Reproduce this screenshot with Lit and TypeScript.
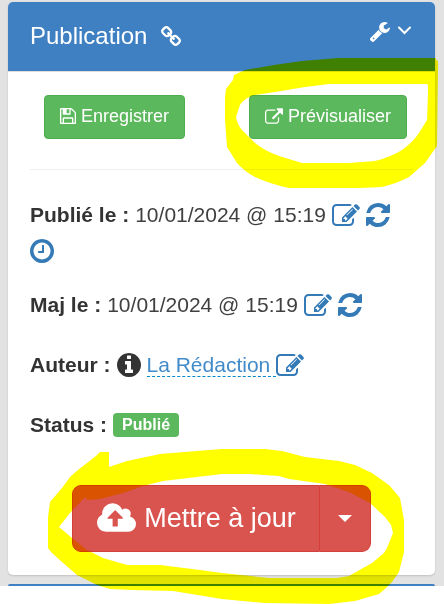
import { LitElement, html, css, nothing } from "lit";
import { customElement, state } from "lit/decorators.js";

interface Glyph {
  box: string;
  d: string;
}

const ROUND = "128 128 1536 1536";

const glyphs: Record<string, Glyph> = {
  link: {
    box: "80 16 1632 1632",
    d: "M1520 1216q0-40-28-68l-208-208q-28-28-68-28-42 0-72 32 3 3 19 18.5t21.5 21.5 15 19 13 25.5 3.5 27.5q0 40-28 68t-68 28q-15 0-27.5-3.5t-25.5-13-19-15-21.5-21.5-18.5-19q-33 31-33 73 0 40 28 68l206 207q27 27 68 27 40 0 68-26l147-146q28-28 28-67zm-703-705q0-40-28-68l-206-207q-28-28-68-28-39 0-68 27l-147 146q-28 28-28 67 0 40 28 68l208 208q27 27 68 27 42 0 72-31-3-3-19-18.5t-21.5-21.5-15-19-13-25.5-3.5-27.5q0-40 28-68t68-28q15 0 27.5 3.5t25.5 13 19 15 21.5 21.5 18.5 19q33-31 33-73zm895 705q0 120-85 203l-147 146q-83 83-203 83-121 0-204-85l-206-207q-83-83-83-203 0-123 88-209l-88-88q-86 88-208 88-120 0-204-84l-208-208q-84-84-84-204t85-203l147-146q83-83 203-83 121 0 204 85l206 207q83 83 83 203 0 123-88 209l88 88q86-88 208-88 120 0 204 84l208 208q84 84 84 204z",
  },
  wrench: {
    box: "85 128 1643 1643",
    d: "M448 1472q0-26-19-45t-45-19-45 19-19 45 19 45 45 19 45-19 19-45zm644-420l-682 682q-37 37-90 37-52 0-91-37l-106-108q-38-36-38-90 0-53 38-91l681-681q39 98 114.5 173.5t173.5 114.5zm634-435q0 39-23 106-47 134-164.5 217.5t-258.5 83.5q-185 0-316.5-131.5t-131.5-316.5 131.5-316.5 316.5-131.5q58 0 121.5 16.5t107.5 46.5q16 11 16 28t-16 28l-293 169v224l193 107q5-3 79-48.5t135.5-81 70.5-35.5q15 0 23.5 10t8.5 25z",
  },
  save: {
    box: ROUND,
    d: "M512 1536h768v-384h-768v384zm896 0h128v-896q0-14-10-38.5t-20-34.5l-281-281q-10-10-34-20t-39-10v416q0 40-28 68t-68 28h-576q-40 0-68-28t-28-68v-416h-128v1280h128v-416q0-40 28-68t68-28h832q40 0 68 28t28 68v416zm-384-928v-320q0-13-9.5-22.5t-22.5-9.5h-192q-13 0-22.5 9.5t-9.5 22.5v320q0 13 9.5 22.5t22.5 9.5h192q13 0 22.5-9.5t9.5-22.5zm640 32v928q0 40-28 68t-68 28h-1344q-40 0-68-28t-28-68v-1344q0-40 28-68t68-28h928q40 0 88 20t76 48l280 280q28 28 48 76t20 88z",
  },
  external: {
    box: "0 0 1792 1536",
    d: "M1408 928v320q0 119-84.5 203.5t-203.5 84.5h-832q-119 0-203.5-84.5t-84.5-203.5v-832q0-119 84.5-203.5t203.5-84.5h704q14 0 23 9t9 23v64q0 14-9 23t-23 9h-704q-66 0-113 47t-47 113v832q0 66 47 113t113 47h832q66 0 113-47t47-113v-320q0-14 9-23t23-9h64q14 0 23 9t9 23zm384-864v512q0 26-19 45t-45 19-45-19l-176-176-652 652q-10 10-23 10t-23-10l-114-114q-10-10-10-23t10-23l652-652-176-176q-19-19-19-45t19-45 45-19h512q26 0 45 19t19 45z",
  },
  edit: {
    box: "0 128 1792 1408",
    d: "M888 1184l116-116-152-152-116 116v56h96v96h56zm440-720q-16-16-33 1l-350 350q-17 17-1 33t33-1l350-350q17-17 1-33zm80 594v190q0 119-84.5 203.5t-203.5 84.5h-832q-119 0-203.5-84.5t-84.5-203.5v-832q0-119 84.5-203.5t203.5-84.5h832q63 0 117 25 15 7 18 23 3 17-9 29l-49 49q-14 14-32 8-23-6-45-6h-832q-66 0-113 47t-47 113v832q0 66 47 113t113 47h832q66 0 113-47t47-113v-126q0-13 9-22l64-64q15-15 35-7t20 29zm-96-738l288 288-672 672h-288v-288zm444 132l-92 92-288-288 92-92q28-28 68-28t68 28l152 152q28 28 28 68t-28 68z",
  },
  refresh: {
    box: ROUND,
    d: "M1639 1056q0 5-1 7-64 268-268 434.5t-478 166.5q-146 0-282.5-55t-243.5-157l-129 129q-19 19-45 19t-45-19-19-45v-448q0-26 19-45t45-19h448q26 0 45 19t19 45-19 45l-137 137q71 66 161 102t187 36q134 0 250-65t186-179q11-17 53-117 8-23 30-23h192q13 0 22.5 9.5t9.5 22.5zm25-800v448q0 26-19 45t-45 19h-448q-26 0-45-19t-19-45 19-45l138-138q-148-137-349-137-134 0-250 65t-186 179q-11 17-53 117-8 23-30 23h-199q-13 0-22.5-9.5t-9.5-22.5v-7q65-268 270-434.5t480-166.5q146 0 284 55.5t245 156.5l130-129q19-19 45-19t45 19 19 45z",
  },
  clock: {
    box: ROUND,
    d: "M1024 544v448q0 14-9 23t-23 9h-320q-14 0-23-9t-9-23v-64q0-14 9-23t23-9h224v-352q0-14 9-23t23-9h64q14 0 23 9t9 23zm416 352q0-148-73-273t-198-198-273-73-273 73-198 198-73 273 73 273 198 198 273 73 273-73 198-198 73-273zm224 0q0 209-103 385.5t-279.5 279.5-385.5 103-385.5-103-279.5-279.5-103-385.5 103-385.5 279.5-279.5 385.5-103 385.5 103 279.5 279.5 103 385.5z",
  },
  info: {
    box: ROUND,
    d: "M1152 1376v-160q0-14-9-23t-23-9h-96v-512q0-14-9-23t-23-9h-320q-14 0-23 9t-9 23v160q0 14 9 23t23 9h96v320h-96q-14 0-23 9t-9 23v160q0 14 9 23t23 9h448q14 0 23-9t9-23zm-128-896v-160q0-14-9-23t-23-9h-192q-14 0-23 9t-9 23v160q0 14 9 23t23 9h192q14 0 23-9t9-23zm640 416q0 209-103 385.5t-279.5 279.5-385.5 103-385.5-103-279.5-279.5-103-385.5 103-385.5 279.5-279.5 385.5-103 385.5 103 279.5 279.5 103 385.5z",
  },
  cloud: {
    box: "-64 128 1920 1408",
    d: "M1216 864q0-14-9-23l-352-352q-9-9-23-9t-23 9l-351 351q-10 12-10 24 0 14 9 23t23 9h224v352q0 13 9.5 22.5t22.5 9.5h192q13 0 22.5-9.5t9.5-22.5v-352h224q13 0 22.5-9.5t9.5-22.5zm640 288q0 159-112.5 271.5t-271.5 112.5h-1088q-185 0-316.5-131.5t-131.5-316.5q0-130 70-240t188-165q-2-30-2-43 0-212 150-362t362-150q156 0 285.5 87t188.5 231q71-62 166-62 106 0 181 75t75 181q0 76-41 138 130 31 213.5 135.5t83.5 238.5z",
  },
};

/** Size classes: s16, s18, s20, s24, s28, s39 (width in pixels). */
const icon = (name: string, size: string) => html`
  <svg class="icon ${size}" viewBox=${glyphs[name].box} aria-hidden="true">
    <path d=${glyphs[name].d}></path>
  </svg>
`;

@customElement("app-root")
export class AppRoot extends LitElement {
  @state() private open = true;

  static styles = css`
    :host {
      display: block;
      position: relative;
      min-height: 100vh;
      overflow: hidden;
      isolation: isolate;
      background: #fff;
      color: #333;
      font: 21px/24px "Liberation Sans", Arial, sans-serif;
    }
    * {
      box-sizing: border-box;
    }
    button {
      margin: 0;
      padding: 0;
      border: 0;
      background: none;
      color: inherit;
      font: inherit;
      cursor: pointer;
    }
    .icon {
      display: block;
      flex: none;
      fill: currentColor;
    }
    .s16 { width: 16px; height: 16px; }
    .s18 { width: 18px; height: 16px; }
    .s20 { width: 20px; height: 20px; }
    .s24 { width: 24px; height: 24px; }
    .s28 { width: 28px; height: 22px; }
    .s39 { width: 39px; height: 29px; }
    .page {
      padding: 2px 9px 0 8px;
      background: #e2e2e2;
    }
    .panel {
      border-radius: 5px;
      background: #fff;
      box-shadow: 0 1px 2px rgba(0, 0, 0, 0.15);
    }
    .head {
      display: flex;
      align-items: center;
      height: 70px;
      padding: 0 24px 2px 22px;
      border-bottom: 1px solid #ddd;
      border-radius: 5px 5px 0 0;
      background: #3f80c2;
      color: #fff;
    }
    .title {
      margin: 0;
      font-size: 24px;
      font-weight: 400;
    }
    .anchor {
      margin-left: 14px;
      color: #fff;
    }
    .tools {
      display: flex;
      align-items: flex-start;
      gap: 8px;
      height: 28px;
      margin-left: auto;
    }
    .chevron {
      display: block;
      width: 13px;
      height: 16px;
      fill: none;
      stroke: #fff;
      stroke-width: 2;
      stroke-linecap: round;
    }
    .body {
      padding: 23px 22px;
    }
    .actions {
      display: flex;
      justify-content: space-between;
      padding: 0 6px 30px 14px;
      border-bottom: 1px solid #eee;
    }
    .btn {
      display: flex;
      align-items: center;
      gap: 5px;
      height: 44px;
      padding: 0 15px 2px;
      border: 1px solid #4cae4c;
      border-radius: 4px;
      background: #5cb85c;
      color: #fff;
      font-size: 18px;
      white-space: nowrap;
    }
    .rows {
      display: flex;
      flex-direction: column;
      gap: 36px;
      padding: 33px 0 48px;
    }
    .row {
      display: flex;
      flex-wrap: wrap;
      align-items: center;
      gap: 12px 6px;
    }
    .dates {
      display: flex;
      flex-direction: column;
      gap: 30px;
    }
    .value {
      color: #404040;
    }
    .act {
      color: #337ab7;
    }
    .author {
      display: flex;
    }
    .author a {
      height: 24px;
      padding-right: 6px;
      border-bottom: 1px dashed #08c;
      color: #428bca;
      text-decoration: none;
    }
    .badge {
      padding: 0 9px;
      border-radius: 4px;
      background: #5cb85c;
      color: #fff;
      font-size: 16px;
      font-weight: 700;
    }
    .update {
      display: flex;
      justify-content: center;
    }
    .main,
    .toggle {
      display: flex;
      align-items: center;
      height: 67px;
      border: 1px solid #d43f3a;
      background: #d9534f;
      color: #fff;
      font-size: 27px;
    }
    .main {
      gap: 8px;
      padding: 0 23px 2px 24px;
      border-radius: 9px 0 0 9px;
      white-space: nowrap;
    }
    .toggle {
      padding: 0 18px;
      border-left: 0;
      border-radius: 0 9px 9px 0;
    }
    .caret {
      border: 7px solid transparent;
      border-top-color: #fff;
      border-bottom: 0;
    }
    .next {
      height: 2px;
      margin-top: 9px;
      border-radius: 5px 5px 0 0;
      background: #3f80c2;
    }
    .marker {
      position: absolute;
      top: 0;
      left: 0;
      width: 444px;
      height: 604px;
      fill: #ff0;
      fill-rule: evenodd;
      mix-blend-mode: multiply;
      pointer-events: none;
    }
  `;

  private edit(label: string) {
    return html`<button class="act" aria-label=${label}>${icon("edit", "s28")}</button>`;
  }

  private dateRow(label: string, value: string, scheduled: boolean) {
    return html`
      <div class="row">
        <strong>${label}</strong>
        <time class="value">${value}</time>
        ${this.edit("Modifier la date")}
        <button class="act" aria-label="Actualiser la date">${icon("refresh", "s24")}</button>
        ${scheduled
          ? html`<button class="act" aria-label="Programmer">${icon("clock", "s24")}</button>`
          : nothing}
      </div>
    `;
  }

  private renderBody() {
    return html`
      <div class="body">
        <div class="actions">
          <button class="btn">${icon("save", "s16")}<span>Enregistrer</span></button>
          <button class="btn">${icon("external", "s18")}<span>Prévisualiser</span></button>
        </div>
        <div class="rows">
          <div class="dates">
            ${this.dateRow("Publié le :", "10/01/2024 @ 15:19", true)}
            ${this.dateRow("Maj le :", "10/01/2024 @ 15:19", false)}
          </div>
          <div class="row">
            <strong>Auteur :</strong>
            ${icon("info", "s24")}
            <span class="author">
              <a href="#auteur">La Rédaction</a>${this.edit("Modifier l'auteur")}
            </span>
          </div>
          <div class="row">
            <strong>Status :</strong>
            <span class="badge">Publié</span>
          </div>
        </div>
        <div class="update">
          <button class="main">${icon("cloud", "s39")}<span>Mettre à jour</span></button>
          <button class="toggle" aria-label="Autres actions"><span class="caret"></span></button>
        </div>
      </div>
    `;
  }

  render() {
    return html`
      <main class="page">
        <section class="panel">
          <header class="head">
            <h2 class="title">Publication</h2>
            <a class="anchor" href="#publication" aria-label="Lien">${icon("link", "s20")}</a>
            <div class="tools">
              <button aria-label="Réglages">${icon("wrench", "s20")}</button>
              <button
                aria-label="Replier"
                aria-expanded=${this.open ? "true" : "false"}
                @click=${() => (this.open = !this.open)}
              >
                <svg class="chevron" viewBox="0 0 13 16" aria-hidden="true">
                  <path d="M1 5.5L6.5 11L12 5.5"></path>
                </svg>
              </button>
            </div>
          </header>
          ${this.open ? this.renderBody() : nothing}
        </section>
        <div class="next"></div>
      </main>
      <svg class="marker" viewBox="0 0 444 604" aria-hidden="true">
        <path
          d="M436 58H338L302 61L274 65L245 70L234 75L233 80L226 89L225 97V120L227 147L237 163Q244 171 255 177Q270 184 289 188H360L382 187Q398 183 409 177L425 163L437 146L438 73V61L436 60Z
             M427 84H329L305 87L275 92L255 95Q244 98 240 105Q238 111 236 117Q237 124 242 130L255 143Q265 151 279 156L302 163H349L375 161Q391 157 402 150Q413 142 419 133L427 120L428 93V86Z"
        ></path>
        <path
          d="M109 452H100L96 456L78 470L70 477L62 488L50 502L48 517V548L52 553L62 562L77 575L97 585L110 589L133 590L173 591L222 599L265 603L329 604L355 601L379 594L386 588L392 582L399 572L404 552V520L400 498L389 485L372 473L355 465L339 461L305 457L282 451L265 449H222L197 451L160 454L127 461L109 467Z
             M59 527L70 513L85 497L87 500L100 499L123 493L143 486L163 481L222 474H249L279 476L289 479L325 484L349 492L370 503L385 517L391 525L393 533L387 548L384 553L372 563L349 576L337 578H269L222 573L200 570L160 565H127L103 558L87 550L72 538Z"
        ></path>
      </svg>
    `;
  }
}
